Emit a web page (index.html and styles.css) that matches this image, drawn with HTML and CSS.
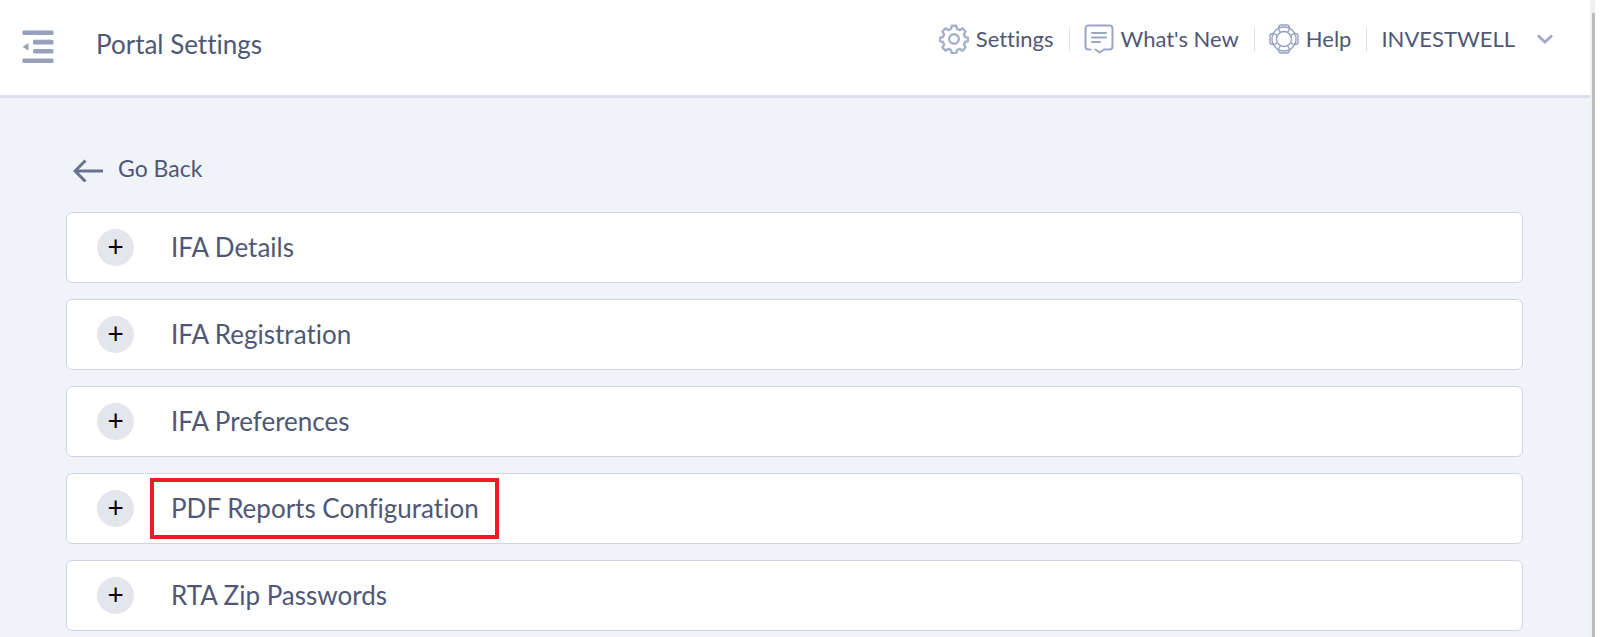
FILE: index.html
```html
<!DOCTYPE html>
<html lang="en">
<head>
	<meta charset="utf-8">
	<title>Portal Settings</title>
	<link rel="stylesheet" href="styles.css">
</head>
<body>
<div class="page">
	<div class="main">
		<header class="topbar">
			<button class="menu_btn" aria-label="Menu">
				<svg width="32" height="34" viewBox="0 0 32 34" fill="#97a1bd">
					<rect x="0.5" y="0.5" width="31" height="4.6" rx="1"/>
					<rect x="11" y="9.8" width="20.5" height="4.6" rx="1.5"/>
					<rect x="11" y="19" width="20.5" height="4.6" rx="1.5"/>
					<rect x="0.5" y="28.4" width="31" height="4.6" rx="1"/>
					<path d="M0.5 17 L6.5 13 V20.5 Z"/>
				</svg>
			</button>
			<h1 class="title">Portal Settings</h1>
			<nav class="nav">
				<a class="nav_item" href="#">
					<svg width="30" height="30" viewBox="0 0 30 30" fill="none" stroke="#a6b0ca" stroke-width="2.4" stroke-linejoin="round">
						<path d="M12.8 1.800h4.400l.8 3.200 2.600 1.100 2.900-1.700 3.100 3.100-1.700 2.900 1.100 2.600 3.200.8v3.400l-3.200.8-1.100 2.600 1.700 2.900-3.100 3.100-2.900-1.700-2.600 1.100-.8 3.200h-4.400l-.8-3.200-2.600-1.100-2.900 1.700-3.100-3.100 1.700-2.900-1.100-2.600-3.200-.8v-3.400l3.200-.8 1.100-2.600-1.700-2.900 3.100-3.100 2.900 1.700 2.600-1.100z"/>
						<circle cx="15" cy="15" r="4.800"/>
					</svg>
					Settings
				</a>
				<a class="nav_item" href="#">
					<svg width="30" height="30" viewBox="0 0 30 30" fill="none" stroke="#9aa6c5" stroke-width="2" stroke-linecap="round" stroke-linejoin="round">
						<path d="M6.500 25.500H4.500a3 3 0 0 1-3-3V4.500a3 3 0 0 1 3-3h21a3 3 0 0 1 3 3v18a3 3 0 0 1-3 3H20l-4.500 3-4-3"/>
						<path d="M8 9h14M8 13.500h14M8 18h8"/>
					</svg>
					What's New
				</a>
				<a class="nav_item" href="#">
					<svg width="30" height="30" viewBox="0 0 30 30" fill="none" stroke="#97a2c0" stroke-width="1.400">
						<circle cx="15" cy="15" r="12"/>
						<circle cx="15" cy="15" r="7.500"/>
						<path d="M9.500 4Q9.500 1 12 1h6q2.500 0 2.500 3M9.500 26q0 3 2.500 3h6q2.500 0 2.500-3M4 9.500Q1 9.500 1 12v6q0 2.500 3 2.500M26 9.500q3 0 3 2.500v6q0 2.500-3 2.500"/>
						<path d="M9.500 4q.2 2.500 2 4.200M20.500 4q-.2 2.500-2 4.200M9.500 26q.2-2.500 2-4.200M20.500 26q-.2-2.500-2-4.200M4 9.500q2.500.2 4.200 2M4 20.500q2.500-.2 4.200-2M26 9.500q-2.500.2-4.200 2M26 20.500q-2.500-.2-4.200-2"/>
					</svg>
					Help
				</a>
				<button class="nav_item user">
					INVESTWELL
					<svg width="16" height="10" viewBox="0 0 16 10" fill="none" stroke="#a0aac6" stroke-width="2.800">
						<path d="M1 1.500l7 6.500 7-6.500"/>
					</svg>
				</button>
			</nav>
		</header>
		<main class="content">
			<a class="back" href="#">
				<svg width="30" height="28" viewBox="0 0 30 28" fill="none" stroke="#69728f" stroke-width="3">
					<path d="M12.500 6.500L2 17l10.500 10.500M2 17h28"/>
				</svg>
				Go Back
			</a>
			<div class="list">
				<button class="card"><span class="plus">+</span><span class="label">IFA Details</span></button>
				<button class="card"><span class="plus">+</span><span class="label">IFA Registration</span></button>
				<button class="card"><span class="plus">+</span><span class="label">IFA Preferences</span></button>
				<button class="card"><span class="plus">+</span><span class="label marked">PDF Reports Configuration</span></button>
				<button class="card"><span class="plus">+</span><span class="label">RTA Zip Passwords</span></button>
			</div>
		</main>
	</div>
	<div class="scroll"><div class="thumb"></div></div>
</div>
</body>
</html>
```
FILE: styles.css
```css
* {
	box-sizing: border-box;
}
body {
	margin: 0;
	font-family: Lato, "Liberation Sans", sans-serif;
	font-variant-ligatures: none;
	color: #4f5776;
}
button {
	font: inherit;
	font-variant-ligatures: none;
	color: inherit;
	background: none;
	border: none;
	padding: 0;
	cursor: pointer;
}
a {
	color: inherit;
	text-decoration: none;
}
svg {
	display: block;
	flex: none;
}
.page {
	display: flex;
	min-height: 100vh;
}
.main {
	flex: 1;
	display: flex;
	flex-direction: column;
}
.topbar {
	display: flex;
	align-items: flex-start;
	height: 98px;
	padding: 0 37px 0 22px;
	border-bottom: 3px solid #dbdfeb;
	background: #fff;
}
.menu_btn {
	margin-top: 30px;
}
.title {
	flex: 1;
	margin: 28px 0 0 42px;
	font-size: 26px;
	line-height: 32px;
	font-weight: 400;
}
.nav {
	display: flex;
	margin-top: 24px;
	font-size: 22px;
	line-height: 30px;
}
.nav_item {
	display: flex;
	align-items: center;
	gap: 7px;
}
.nav_item + .nav_item::before {
	content: "";
	width: 1px;
	height: 23px;
	margin: 0 7px 0 15px;
	background: #dcdfe6;
}
.user {
	gap: 22px;
}
.nav .user::before {
	margin-right: -8px;
}
.content {
	flex: 1;
	padding: 55px 67px 7px 66px;
	background: #f0f4f9;
}
.back {
	display: flex;
	align-items: center;
	gap: 15px;
	width: fit-content;
	margin-left: 7px;
	font-size: 23px;
	line-height: 30px;
}
.list {
	display: flex;
	flex-direction: column;
	gap: 16px;
	margin-top: 29px;
}
.card {
	display: flex;
	align-items: center;
	gap: 16px;
	height: 71px;
	padding: 0 30px;
	border: 1px solid #ccd4e6;
	border-radius: 6px;
	background: #fff;
	text-align: left;
}
.plus {
	width: 37px;
	height: 37px;
	border-radius: 50%;
	background: #e4e6ec;
	color: #000;
	font-size: 28px;
	line-height: 34px;
	text-align: center;
}
.label {
	padding: 10px 16px 11px 17px;
	border: 4px solid transparent;
	font-size: 26px;
	line-height: 32px;
}
.marked {
	border-color: #ed1c24;
}
.scroll {
	width: 10px;
	padding: 13px 5px 0 2px;
	background: linear-gradient(to right, #f0f0f0 5px, #fff 5px);
}
.thumb {
	height: 100%;
	background: #bdbdbd;
}
```
